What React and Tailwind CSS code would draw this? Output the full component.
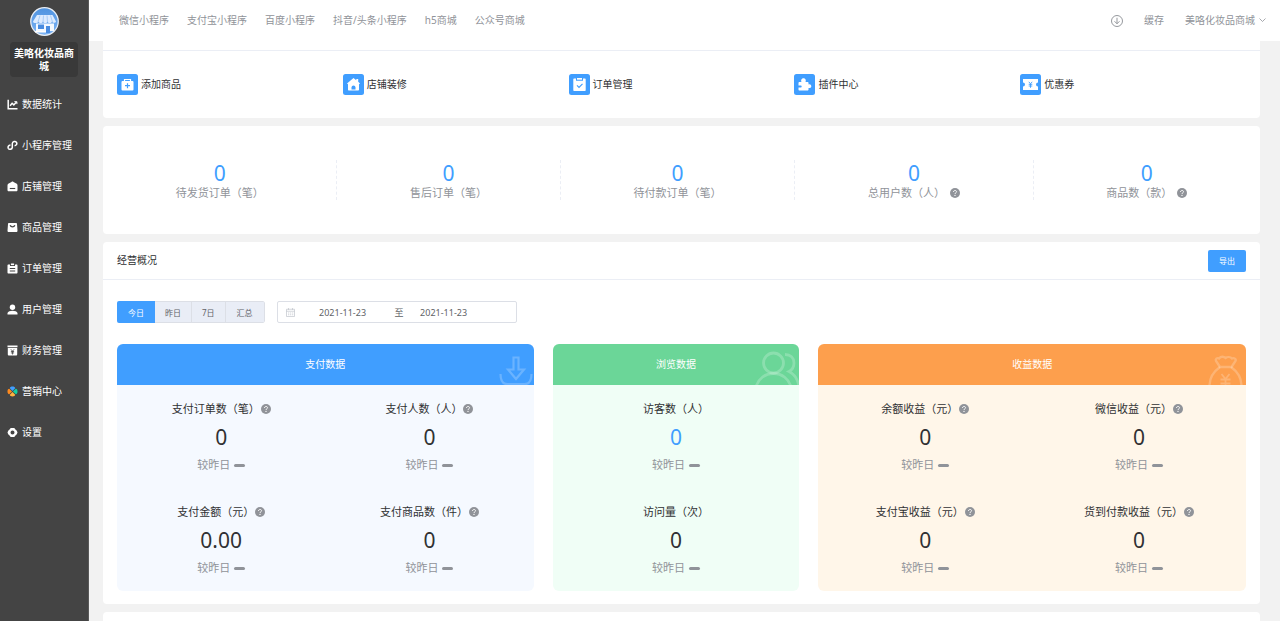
import React from "react";

const shops = ["微信小程序", "支付宝小程序", "百度小程序", "抖音/头条小程序", "h5商城", "公众号商城"];

const menu = [
  ["数据统计", "chart"],
  ["小程序管理", "mini"],
  ["店铺管理", "shop"],
  ["商品管理", "goods"],
  ["订单管理", "order"],
  ["用户管理", "user"],
  ["财务管理", "finance"],
  ["营销中心", "market"],
  ["设置", "setting"],
];

const quick = [
  ["添加商品", "add"],
  ["店铺装修", "home"],
  ["订单管理", "clipboard"],
  ["插件中心", "plugin"],
  ["优惠券", "coupon"],
];

const stats = [
  ["待发货订单（笔）", false],
  ["售后订单（笔）", false],
  ["待付款订单（笔）", false],
  ["总用户数（人）", true],
  ["商品数（款）", true],
];

const panels = [
  {
    title: "支付数据",
    art: "download",
    head: "bg-[#409eff]",
    body: "grid-cols-2 bg-[#f5f9ff]",
    items: [
      { label: "支付订单数（笔）", value: "0", help: true },
      { label: "支付人数（人）", value: "0", help: true },
      { label: "支付金额（元）", value: "0.00", help: true },
      { label: "支付商品数（件）", value: "0", help: true },
    ],
  },
  {
    title: "浏览数据",
    art: "people",
    head: "bg-[#6bd698]",
    body: "grid-cols-1 bg-[#f0fef6]",
    items: [
      { label: "访客数（人）", value: "0", blue: true },
      { label: "访问量（次）", value: "0" },
    ],
  },
  {
    title: "收益数据",
    art: "bag",
    head: "bg-[#fd9f4d]",
    body: "grid-cols-2 bg-[#fff6e9]",
    items: [
      { label: "余额收益（元）", value: "0", help: true },
      { label: "微信收益（元）", value: "0", help: true },
      { label: "支付宝收益（元）", value: "0", help: true },
      { label: "货到付款收益（元）", value: "0", help: true },
    ],
  },
];

function Logo() {
  return (
    <svg viewBox="0 0 58 58" className="size-[29px]" aria-hidden="true">
      <defs>
        <linearGradient id="sky" x1="0" y1="0" x2="0" y2="1">
          <stop offset="0" stopColor="#4f93e0" />
          <stop offset="1" stopColor="#7db4f5" />
        </linearGradient>
      </defs>
      <circle cx="29" cy="29" r="27.5" fill="url(#sky)" stroke="#e9eef5" strokeWidth="2.5" />
      <path d="M14 16h31l7 13c0 3-7 4-8 0-1 4-8 4-9 0-1 4-8 4-9 0-1 4-8 4-9 0-1 4-11 4-11 0z" fill="#dcebff" />
      <path d="M20 17l-4 13M27 17l-1 13M34 17l1 13M41 17l4 13" stroke="#a9ccf7" strokeWidth="2" />
      <path d="M12 33h36v15H12z" fill="#f4f9ff" />
      <path d="M16 35h12v9H16z" fill="#4a8ce0" />
      <path d="M32 38h8v14h-8z" fill="#4a8ce0" />
      <path d="M10 48h22v3H10z" fill="#fff" />
    </svg>
  );
}

function MenuIcon({ name }) {
  const line = { fill: "none", stroke: "#fff", strokeWidth: 1.5 };
  const art = {
    chart: (
      <g {...line}>
        <path d="M.7 .3v8.900H10" />
        <path d="M2.600 6.200l2-2.400L6.300 5.400 9 2.600" />
        <path d="M6.800 2.200h2.600v2.400" strokeWidth="1" />
      </g>
    ),
    mini: (
      <path
        {...line}
        d="M3 4.600C.9 4.800.2 6.400.8 7.800c.8 1.600 3.600 1.300 4-.8V3C5 .9 7.900 .3 9 1.900c.8 1.400 0 3.100-1.900 3.400"
      />
    ),
    shop: (
      <g>
        <path d="M0 4c0-1 .5-1.600 1.200-2L4 .4c.6-.4 1.400-.4 2 0L8.800 2C9.500 2.400 10 3 10 4v4.500c0 .8-.5 1.300-1.300 1.300H1.300C.5 9.800 0 9.300 0 8.500z" fill="#fff" />
        <path d="M2.300 7h5.400" stroke="#444" strokeWidth="1.100" />
      </g>
    ),
    goods: (
      <g>
        <path d="M.5 1.500C.5 .8 1 .5 1.600 .5h6.800c.6 0 1.100.3 1.100 1L10 8.300c0 .8-.5 1.200-1.200 1.200H1.200C.5 9.500 0 9.100 0 8.300z" fill="#fff" />
        <path d="M2.600 2.800c.8 2 4 2 4.800 0" fill="none" stroke="#444" strokeWidth="1.200" />
      </g>
    ),
    order: (
      <g>
        <path d="M1 1h1.500v1.500h5V1H9c.6 0 1 .4 1 1v7c0 .6-.4 1-1 1H1c-.6 0-1-.4-1-1V2c0-.6.4-1 1-1z" fill="#fff" />
        <path d="M3.400 0h3.200v1.600H3.400z" fill="#fff" />
        <path d="M2.300 5h5.400M2.300 7.500h5.400" stroke="#444" />
      </g>
    ),
    user: (
      <g fill="#fff">
        <circle cx="5" cy="2.700" r="2.700" />
        <path d="M0 10V8.600C.6 6.900 2.600 6.200 5 6.200s4.400.7 5 2.400V10z" />
      </g>
    ),
    finance: (
      <g>
        <path d="M0 0h10v1.800H0zM.3 2.600h9.400v6.500c0 .5-.3.900-.9.900H1.200c-.6 0-.9-.4-.9-.9z" fill="#fff" />
        <path d="M3.400 3.800L5 5.700l1.600-1.900M5 5.700V9M3.400 6h3.200M3.400 7.400h3.200" fill="none" stroke="#444" strokeWidth=".8" />
      </g>
    ),
    market: (
      <g>
        <path d="M5 4.600L2.300 1.700C2.300 -.6 7.700 -.6 7.700 1.700z" fill="#409eff" />
        <path d="M5.400 5L8.300 2.300c2.300 0 2.300 5.400 0 5.400z" fill="#15cfa2" />
        <path d="M5 5.400l2.700 2.900c0 2.300-5.400 2.300-5.400 0z" fill="#ffb340" />
        <path d="M4.600 5L1.700 7.700c-2.300 0-2.300-5.400 0-5.400z" fill="#ff8a1e" />
      </g>
    ),
    setting: (
      <path
        fill="#fff"
        fillRule="evenodd"
        d="M3.200 .5h3.600l.9 1.200L9.300 3.300 10 5l-.7 1.700-1.600 1.600-.9 1.200H3.200l-.9-1.200L.7 6.700 0 5l.7-1.700 1.600-1.600zM5 3a2 2 0 1 0 0 4 2 2 0 0 0 0-4z"
      />
    ),
  };
  return (
    <svg viewBox="-.5 -.5 11 11" className="size-[11px] shrink-0" aria-hidden="true">
      {art[name]}
    </svg>
  );
}

function QuickIcon({ name }) {
  const art = {
    add: (
      <g>
        <path d="M7.500 7V5.500h6V7" fill="none" stroke="#fff" strokeWidth="1.200" />
        <rect x="4.500" y="7" width="12" height="9.500" rx="1" fill="#fff" />
        <path d="M10.500 9.200v5M8 11.700h5" stroke="#409eff" strokeWidth="1.200" />
      </g>
    ),
    home: (
      <g>
        <path d="M10.500 4l2.800 2.200V5h1.900v2.700L17 9.500l-1 .8v5.200c0 .6-.4 1-1 1H6c-.6 0-1-.4-1-1v-5.200l-1-.8z" fill="#fff" />
        <path d="M8.500 15.500v-2a2 2 0 0 1 4 0v2z" fill="#409eff" />
      </g>
    ),
    clipboard: (
      <g>
        <path d="M5 4.500h2v2.200h7V4.500h2c.4 0 .7.300 .7.700v11c0 .4-.3.700-.7.700H5c-.4 0-.7-.3-.7-.7v-11c0-.4.3-.7.700-.7z" fill="#fff" />
        <path d="M8 4h5v1.700H8z" fill="#fff" />
        <path d="M8 11.300l2 2 3.500-3.500" fill="none" stroke="#409eff" strokeWidth="1.200" />
      </g>
    ),
    plugin: (
      <path
        d="M4.500 9c0-.6.400-1 1-1h2c-1-2 .4-3.700 2-3.700s3 1.700 2 3.700h2c.6 0 1 .4 1 1v1.500c1.600-.6 2.800.4 2.800 1.700s-1.200 2.300-2.800 1.700V15.500c0 .6-.4 1-1 1h-8c-.6 0-1-.4-1-1v-2h2.300c1.200 0 1.200-2 0-2H4.500z"
        fill="#fff"
      />
    ),
    coupon: (
      <g>
        <path d="M3 5h15v3.500a2 2 0 0 0 0 4V16H3v-3.500a2 2 0 0 0 0-4z" fill="#fff" />
        <path d="M8.800 7.800l1.700 2 1.700-2M10.500 9.800v4M8.700 10.300h3.600M8.700 12h3.600" fill="none" stroke="#409eff" strokeWidth=".9" />
      </g>
    ),
  };
  return (
    <svg viewBox="0 0 21 21" className="size-[21px] shrink-0" aria-hidden="true">
      <rect width="21" height="21" rx="2.500" fill="#409eff" />
      {art[name]}
    </svg>
  );
}

function PanelArt({ name }) {
  const art = {
    download: (
      <g strokeWidth="2.200">
        <path d="M23.500 13.500h5v12h5.500l-8 9.500-8-9.500h5.500z" />
        <path d="M10.500 30c0 7 2.500 10.200 7 10.200h17c4.500 0 7-3.200 7-10.200" />
      </g>
    ),
    people: (
      <g strokeWidth="2.800">
        <circle cx="18.500" cy="19" r="10" />
        <path d="M1 43c2-8 9-13.500 17.500-13.500S34 35 36 43" />
        <path d="M30 10.500c5.500 0 9 3.500 9 8.500 0 4-2 7-5 8.500 5 2.500 8.500 7 10 14.500" />
      </g>
    ),
    bag: (
      <g strokeWidth="2.400">
        <path d="M18 23l-4-6c-1-2 1-3.500 3-2.500 2-2.500 5-2 6.500-.5 2-1.500 5-1 6.500 .5 2-1 4.500 .5 3.500 2.500l-4 6M17 23h13" />
        <path d="M18 23C11 28 7.500 34 7.500 42M29 23c7 5 10.500 11 10.500 19" />
        <path d="M19.500 30l4 5 4-5M23.500 35v8M18.500 35.500h10M18.500 39.500h10" strokeWidth="1.800" />
      </g>
    ),
  };
  return (
    <svg
      viewBox="0 0 44 41"
      className="absolute right-0 bottom-0 h-[41px] w-[44px]"
      fill="none"
      stroke="#fff"
      strokeOpacity=".22"
      aria-hidden="true"
    >
      {art[name]}
    </svg>
  );
}

function Help() {
  return (
    <svg viewBox="0 0 20 20" className="size-[10px] shrink-0" aria-hidden="true">
      <circle cx="10" cy="10" r="10" fill="#909399" />
      <path d="M7 8c0-4 6-4 6-.5C13 9.700 10 9.700 10 12" fill="none" stroke="#fff" strokeWidth="2" />
      <circle cx="10" cy="14.800" r="1.300" fill="#fff" />
    </svg>
  );
}

function Metric({ label, value, help, blue }) {
  return (
    <div className="flex flex-col items-center pt-[10px] pb-[9px] leading-7">
      <div className="flex items-center gap-px text-[11px]">
        {label}
        {help && <Help />}
      </div>
      <div className={blue ? "text-[21px] text-[#409eff]" : "text-[21px]"}>{value}</div>
      <div className="flex items-center gap-1 text-[11px] text-[#909399]">
        较昨日
        <span className="h-[3px] w-[11px] rounded-full bg-[#909399]" />
      </div>
    </div>
  );
}

export default function App() {
  return (
    <div className="flex min-h-screen bg-[#f2f2f2] font-['Noto_Sans','Noto_Sans_CJK_SC',sans-serif] text-[10px] leading-[13px] text-[#303133]">
      <aside className="flex w-[89px] shrink-0 flex-col border-r border-[#5a5a5a] bg-[#444] text-white">
        <div className="flex flex-col items-center px-[10px] pt-[7px] pb-[7px]">
          <Logo />
          <div className="mt-[6px] w-full rounded-sm bg-[#393939] px-1 pt-[5px] pb-1 text-center font-bold">
            美咯化妆品商城
          </div>
        </div>
        <nav>
          {menu.map(([label, icon]) => (
            <a key={label} href="#" className="flex h-[41px] items-center gap-1 pl-[7px] whitespace-nowrap">
              <MenuIcon name={icon} />
              {label}
            </a>
          ))}
        </nav>
      </aside>

      <div className="flex min-w-0 flex-1 flex-col">
        <header className="flex h-[41px] items-center justify-between bg-white pr-[14px] pl-[30px] text-[#909399]">
          <nav className="flex gap-[18px]">
            {shops.map((s) => (
              <a key={s} href="#" className="whitespace-nowrap">
                {s}
              </a>
            ))}
          </nav>
          <div className="flex items-center gap-[21px]">
            <button type="button" aria-label="下载">
              <svg viewBox="0 0 24 24" className="size-3" fill="none" stroke="#909399" strokeWidth="1.900" aria-hidden="true">
                <circle cx="12" cy="12" r="11" />
                <path d="M12 5.500v12M7 12.500l5 5 5-5" />
              </svg>
            </button>
            <button type="button">缓存</button>
            <button type="button" className="flex items-center gap-1">
              美咯化妆品商城
              <svg viewBox="0 0 14 14" className="size-[7px]" fill="none" stroke="#909399" strokeWidth="1.600" aria-hidden="true">
                <path d="M1 3l6 6 6-6" />
              </svg>
            </button>
          </div>
        </header>

        <main className="flex flex-1 flex-col gap-2 pr-5 pl-[14px]">
          <section className="rounded-b-sm bg-white">
            <div className="h-[10px] border-b border-[#ebeef5]" />
            <div className="grid grid-cols-5 px-[14px] py-[23px]">
              {quick.map(([label, icon]) => (
                <a key={label} href="#" className="flex items-center gap-[3px]">
                  <QuickIcon name={icon} />
                  {label}
                </a>
              ))}
            </div>
          </section>

          <section className="flex rounded-sm bg-white py-[34px]">
            {stats.map(([label, help]) => (
              <div
                key={label}
                className="flex flex-auto flex-col items-center border-r border-dashed border-[#ebeef5] last:border-r-0"
              >
                <div className="text-[21px] leading-[26px] text-[#409eff]">0</div>
                <div className="flex items-center gap-[5px] text-[11px] leading-[14px] text-[#909399]">
                  {label}
                  {help && <Help />}
                </div>
              </div>
            ))}
          </section>

          <section className="rounded-sm bg-white">
            <div className="flex h-[38px] items-center justify-between border-b border-[#ebeef5] px-[14px]">
              <h2>经营概况</h2>
              <button type="button" className="h-[22px] rounded-xs bg-[#409eff] px-[11px] text-[8px] text-white">
                导出
              </button>
            </div>
            <div className="px-[14px] pt-[21px] pb-[13px]">
              <div className="flex items-center gap-3">
                <div className="flex h-[22px] overflow-hidden rounded-xs text-[8px] text-[#606266]">
                  <button type="button" className="bg-[#409eff] px-[11px] text-white">
                    今日
                  </button>
                  <button type="button" className="border-y border-r border-[#dcdfe6] bg-[#e9edf6] px-[10px]">
                    昨日
                  </button>
                  <button type="button" className="border-y border-r border-[#dcdfe6] bg-[#e9edf6] px-[10px]">
                    7日
                  </button>
                  <button type="button" className="rounded-r-xs border-y border-r border-[#dcdfe6] bg-[#e9edf6] px-[11px]">
                    汇总
                  </button>
                </div>
                <div className="flex h-[22px] w-[240px] items-center rounded-xs border border-[#dcdfe6] pl-2 text-[9px] text-[#606266]">
                  <svg viewBox="0 0 18 18" className="size-[9px]" fill="none" stroke="#c0c4cc" strokeWidth="1.400" aria-hidden="true">
                    <path d="M1 2.500h16V17H1zM1 6.500h16M5 0v4M13 0v4M4 10h2.500M8 10h2.500M12 10h2.500M4 13.500h2.500M8 13.500h2.500M12 13.500h2.500" />
                  </svg>
                  <input
                    type="text"
                    aria-label="开始日期"
                    defaultValue="2021-11-23"
                    className="ml-2 w-20 bg-transparent text-center outline-none"
                  />
                  <span className="pl-3">至</span>
                  <input
                    type="text"
                    aria-label="结束日期"
                    defaultValue="2021-11-23"
                    className="w-20 bg-transparent text-center outline-none"
                  />
                </div>
              </div>

              <div className="mt-[21px] grid grid-cols-[417fr_247fr_428fr] gap-[19px]">
                {panels.map((p) => (
                  <section key={p.title} className="overflow-hidden rounded-md">
                    <h3 className={`relative flex h-[41px] items-center justify-center text-white ${p.head}`}>
                      {p.title}
                      <PanelArt name={p.art} />
                    </h3>
                    <div className={`grid ${p.body}`}>
                      {p.items.map((m) => (
                        <Metric key={m.label} {...m} />
                      ))}
                    </div>
                  </section>
                ))}
              </div>
            </div>
          </section>

          <section className="flex-1 rounded-t-sm bg-white" />
        </main>
      </div>
    </div>
  );
}
